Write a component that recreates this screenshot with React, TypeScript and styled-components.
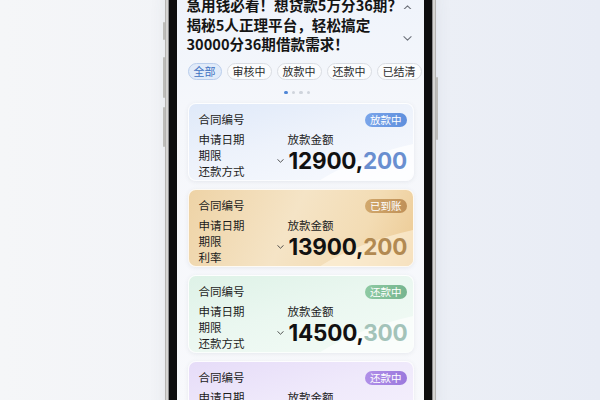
import React from 'react';
import styled, { createGlobalStyle } from 'styled-components';

const GlobalStyle = createGlobalStyle`
  html, body {
    margin: 0;
    padding: 0;
    width: 600px;
    height: 400px;
    overflow: hidden;
  }
  body {
    font-family: "Noto Sans CJK SC", "Noto Sans", sans-serif;
  }
`;

type Tone = 'blue' | 'gold' | 'green' | 'purple';

const tones: Record<Tone, { bg: string; wave: string; badge: string; accent: string }> = {
  blue: {
    bg: 'linear-gradient(165deg, #dfe9f9 0%, #edf2fb 45%, #f8fafe 100%)',
    wave: 'rgba(255,255,255,0.75)',
    badge: 'linear-gradient(90deg, #7aa5ea, #5f8fdd)',
    accent: '#6a8fd0',
  },
  gold: {
    bg: 'linear-gradient(115deg, #eed3a6 0%, #f5e4c6 45%, #f3dcb4 75%, #ecc992 100%)',
    wave: 'rgba(255,246,228,0.55)',
    badge: 'linear-gradient(90deg, #d2a86c, #bf9058)',
    accent: '#b28a52',
  },
  green: {
    bg: 'linear-gradient(165deg, #def2e7 0%, #eaf7f0 45%, #f3fbf6 100%)',
    wave: 'rgba(255,255,255,0.6)',
    badge: 'linear-gradient(90deg, #8ecaa3, #76b58f)',
    accent: '#a3c3b9',
  },
  purple: {
    bg: 'linear-gradient(165deg, #e6dcf8 0%, #efe9fb 45%, #f6f2fd 100%)',
    wave: 'rgba(255,255,255,0.6)',
    badge: 'linear-gradient(90deg, #b08fe8, #9b78dd)',
    accent: '#9d84d6',
  },
};

const Stage = styled.div`
  width: 600px;
  height: 400px;
  background: linear-gradient(90deg, #f5f6f8 0%, #f1f3f7 40%, #e8ecf5 100%);
  display: flex;
  justify-content: center;
  overflow: hidden;
`;

const Phone = styled.div`
  position: relative;
  margin-top: -40px;
  width: 263px;
  height: 480px;
  padding: 8px;
  box-sizing: border-box;
  background: #0d0d0e;
  border-radius: 38px;
  box-shadow: 0 0 0 1px #8e8e90, 0 0 0 3px #d6d5d3, 0 0 0 4px #b5b4b2,
    0 6px 20px rgba(60, 70, 90, 0.12);
`;

const SideButton = styled.div<{ $side: 'left' | 'right'; $top: number; $h: number }>`
  position: absolute;
  ${(p) => (p.$side === 'left' ? 'left: -6px;' : 'right: -6px;')}
  top: ${(p) => p.$top}px;
  width: 2px;
  height: ${(p) => p.$h}px;
  background: #bdbcb9;
  border-radius: 1px;
`;

const Screen = styled.div`
  width: 100%;
  height: 100%;
  border-radius: 30px;
  overflow: hidden;
  background: linear-gradient(180deg, #eef3fb 0%, #f5f7fb 30%, #f8f9fc 100%);
  padding: 28px 10px 0 10px;
  box-sizing: border-box;
`;

const TitleRow = styled.div`
  display: flex;
  justify-content: space-between;
  margin-top: -1px;
`;

const Title = styled.div`
  font-size: 14.6px;
  line-height: 19.5px;
  font-weight: 700;
  color: #151515;
  white-space: nowrap;
`;

const Chevrons = styled.div`
  display: flex;
  flex-direction: column;
  justify-content: space-between;
  padding: 9.5px 2px 13px 0;
`;

const Chips = styled.div`
  display: flex;
  gap: 5px;
  margin-top: 9.5px;
  margin-left: 1px;
  white-space: nowrap;
`;

const Chip = styled.div<{ $active?: boolean }>`
  flex-shrink: 0;
  height: 17px;
  line-height: 15px;
  padding: 0 5px;
  font-size: 11px;
  border-radius: 9px;
  box-sizing: border-box;
  border: 1px solid ${(p) => (p.$active ? '#b9cdec' : '#d9dce2')};
  background: ${(p) => (p.$active ? '#e1ebf9' : '#fbfcfd')};
  color: ${(p) => (p.$active ? '#3f72c2' : '#2a2a2a')};
`;

const Dots = styled.div`
  display: flex;
  justify-content: center;
  gap: 4px;
  margin: 10.5px 0 9px;
  padding-right: 6px;
`;

const Dot = styled.span<{ $active?: boolean }>`
  width: 3.5px;
  height: 3.5px;
  border-radius: 50%;
  background: ${(p) => (p.$active ? '#4f86d6' : '#cfd4dc')};
`;

const CardList = styled.div`
  display: flex;
  flex-direction: column;
  gap: 8px;
  padding-left: 1px;
`;

const Card = styled.div<{ $tone: Tone }>`
  position: relative;
  height: 78px;
  box-sizing: border-box;
  border-radius: 8px;
  padding: 7px 6px 0 10px;
  overflow: hidden;
  background: ${(p) => tones[p.$tone].bg};
  border: 1px solid rgba(255, 255, 255, 0.85);
  box-shadow: 0 1px 4px rgba(80, 90, 110, 0.1);

  &::before {
    content: '';
    position: absolute;
    left: 90px;
    top: 38px;
    width: 300px;
    height: 120px;
    border-radius: 50%;
    background: ${(p) => tones[p.$tone].wave};
    transform: rotate(-12deg);
  }
`;

const CardHead = styled.div`
  position: relative;
  display: flex;
  justify-content: space-between;
  align-items: flex-start;
`;

const Label = styled.div`
  font-size: 11.5px;
  line-height: 16px;
  color: #1c1c1c;
  white-space: nowrap;
`;

const Badge = styled.div<{ $tone: Tone }>`
  margin-top: 2px;
  height: 14px;
  line-height: 14px;
  padding: 0 5px;
  border-radius: 7px;
  font-size: 10.5px;
  color: #fff;
  background: ${(p) => tones[p.$tone].badge};
`;

const CardBody = styled.div`
  position: relative;
  display: flex;
  margin-top: 4px;
`;

const Labels = styled.div`
  width: 68px;
  flex-shrink: 0;
`;

const Divider = styled.div`
  width: 1px;
  margin-top: -2px;
  height: 44px;
  background: rgba(120, 130, 150, 0.15);
`;

const AmountCol = styled.div`
  padding-left: 10px;
`;

const AmountLabel = styled(Label)`
  padding-left: 11px;
`;

const AmountRow = styled.div`
  display: flex;
  align-items: center;
  gap: 5px;
  margin-top: 1px;
`;

const Amount = styled.div`
  font-family: Inter, "Liberation Sans", sans-serif;
  font-size: 22.5px;
  line-height: 26px;
  font-weight: 700;
  letter-spacing: -0.2px;
  color: #111;
  white-space: nowrap;
`;

const Accent = styled.span<{ $tone: Tone }>`
  color: ${(p) => tones[p.$tone].accent};
`;

const ChevronIcon = ({ up, size = 9, color = '#6b6f78' }: { up?: boolean; size?: number; color?: string }) => (
  <svg width={size} height={size * 0.55} viewBox="0 0 10 5.5" fill="none">
    <polyline
      points={up ? '1,4.8 5,1 9,4.8' : '1,0.8 5,4.6 9,0.8'}
      stroke={color}
      strokeWidth="1.2"
      strokeLinecap="round"
      strokeLinejoin="round"
    />
  </svg>
);

interface Contract {
  tone: Tone;
  status: string;
  rows: string[];
  main: string;
  tail: string;
}

const contracts: Contract[] = [
  { tone: 'blue', status: '放款中', rows: ['申请日期', '期限', '还款方式'], main: '12900,', tail: '200' },
  { tone: 'gold', status: '已到账', rows: ['申请日期', '期限', '利率'], main: '13900,', tail: '200' },
  { tone: 'green', status: '还款中', rows: ['申请日期', '期限', '还款方式'], main: '14500,', tail: '300' },
  { tone: 'purple', status: '还款中', rows: ['申请日期', '期限', '还款方式'], main: '15200,', tail: '300' },
];

const tabs = ['全部', '审核中', '放款中', '还款中', '已结清', '已逾期'];

const App: React.FC = () => {
  return (
    <Stage>
      <GlobalStyle />
      <Phone>
        <SideButton $side="left" $top={62} $h={18} />
        <SideButton $side="left" $top={97} $h={41} />
        <SideButton $side="left" $top={147} $h={40} />
        <SideButton $side="right" $top={117} $h={63} />
        <Screen>
          <TitleRow>
            <Title>
              急用钱必看！想贷款5万分36期？
              <br />
              揭秘5人正理平台，轻松搞定
              <br />
              30000分36期借款需求！
            </Title>
            <Chevrons>
              <ChevronIcon up />
              <ChevronIcon />
            </Chevrons>
          </TitleRow>

          <Chips>
            {tabs.map((t, i) => (
              <Chip key={t} $active={i === 0}>
                {t}
              </Chip>
            ))}
          </Chips>

          <Dots>
            <Dot $active />
            <Dot />
            <Dot />
            <Dot />
          </Dots>

          <CardList>
            {contracts.map((c, i) => (
              <Card key={i} $tone={c.tone}>
                <CardHead>
                  <Label>合同编号</Label>
                  <Badge $tone={c.tone}>{c.status}</Badge>
                </CardHead>
                <CardBody>
                  <Labels>
                    {c.rows.map((r) => (
                      <Label key={r}>{r}</Label>
                    ))}
                  </Labels>
                  <Divider />
                  <AmountCol>
                    <AmountLabel>放款金额</AmountLabel>
                    <AmountRow>
                      <ChevronIcon size={7} color="#333" />
                      <Amount>
                        {c.main}
                        <Accent $tone={c.tone}>{c.tail}</Accent>
                      </Amount>
                    </AmountRow>
                  </AmountCol>
                </CardBody>
              </Card>
            ))}
          </CardList>
        </Screen>
      </Phone>
    </Stage>
  );
};

export default App;
